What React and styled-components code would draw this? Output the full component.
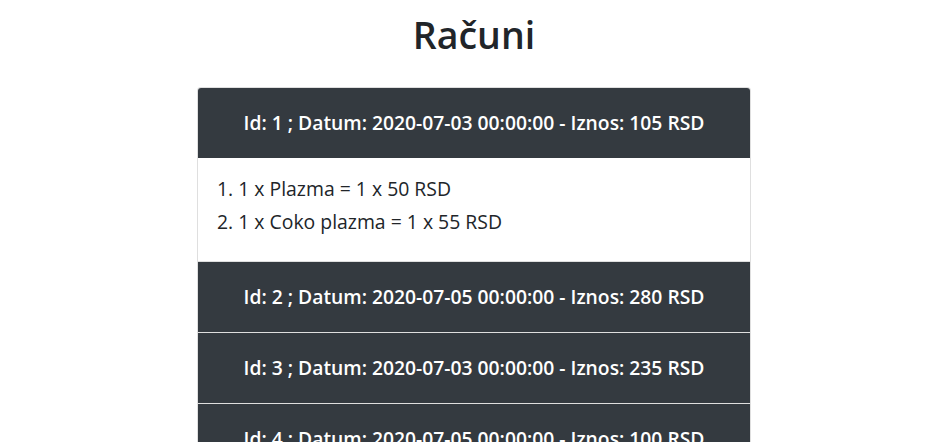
import styled, { createGlobalStyle } from "styled-components";

const GlobalStyle = createGlobalStyle`
    body {
        margin: 0;
        font-family: "Open Sans", "Noto Sans", sans-serif;
        color: #212529;
        background: #fff;
    }
`;

const Page = styled.div`
    display: flex;
    flex-direction: column;
    align-items: center;
    padding-top: 7px;
`;

const Title = styled.h1`
    margin: 0 0 24px;
    font-size: 37.5px;
    font-weight: 600;
    line-height: 56px;
    color: #212529;
`;

const Accordion = styled.div`
    width: 554px;
    display: flex;
    flex-direction: column;
`;

const Card = styled.div`
    border: 1px solid rgba(0, 0, 0, 0.125);
    border-bottom: none;
    background: #fff;
    &:first-child {
        border-radius: 4px 4px 0 0;
        overflow: hidden;
    }
`;

const Header = styled.div`
    height: 70px;
    display: flex;
    align-items: center;
    justify-content: center;
    padding-bottom: 2px;
    box-sizing: border-box;
    background: #343a40;
    color: #fff;
    font-size: 19.3px;
    font-weight: 600;
`;

const Body = styled.ol`
    margin: 0;
    padding: 14px 19px 23px;
    list-style-position: inside;
    font-size: 19.4px;
    font-weight: 500;
    line-height: 33px;
`;

const racuni = [
    {
        id: 1,
        datum: "2020-07-03 00:00:00",
        iznos: 105,
        stavke: ["1 x Plazma = 1 x 50 RSD", "1 x Coko plazma = 1 x 55 RSD"],
        open: true
    },
    { id: 2, datum: "2020-07-05 00:00:00", iznos: 280 },
    { id: 3, datum: "2020-07-03 00:00:00", iznos: 235 },
    { id: 4, datum: "2020-07-05 00:00:00", iznos: 100 }
];

export default function App() {
    return (
        <Page>
            <GlobalStyle />
            <Title>Računi</Title>
            <Accordion>
                {racuni.map((r) => (
                    <Card key={r.id}>
                        <Header>
                            Id: {r.id} ; Datum: {r.datum} - Iznos: {r.iznos} RSD
                        </Header>
                        {r.open && (
                            <Body>
                                {r.stavke.map((s, i) => (
                                    <li key={i}>{s}</li>
                                ))}
                            </Body>
                        )}
                    </Card>
                ))}
            </Accordion>
        </Page>
    );
}
